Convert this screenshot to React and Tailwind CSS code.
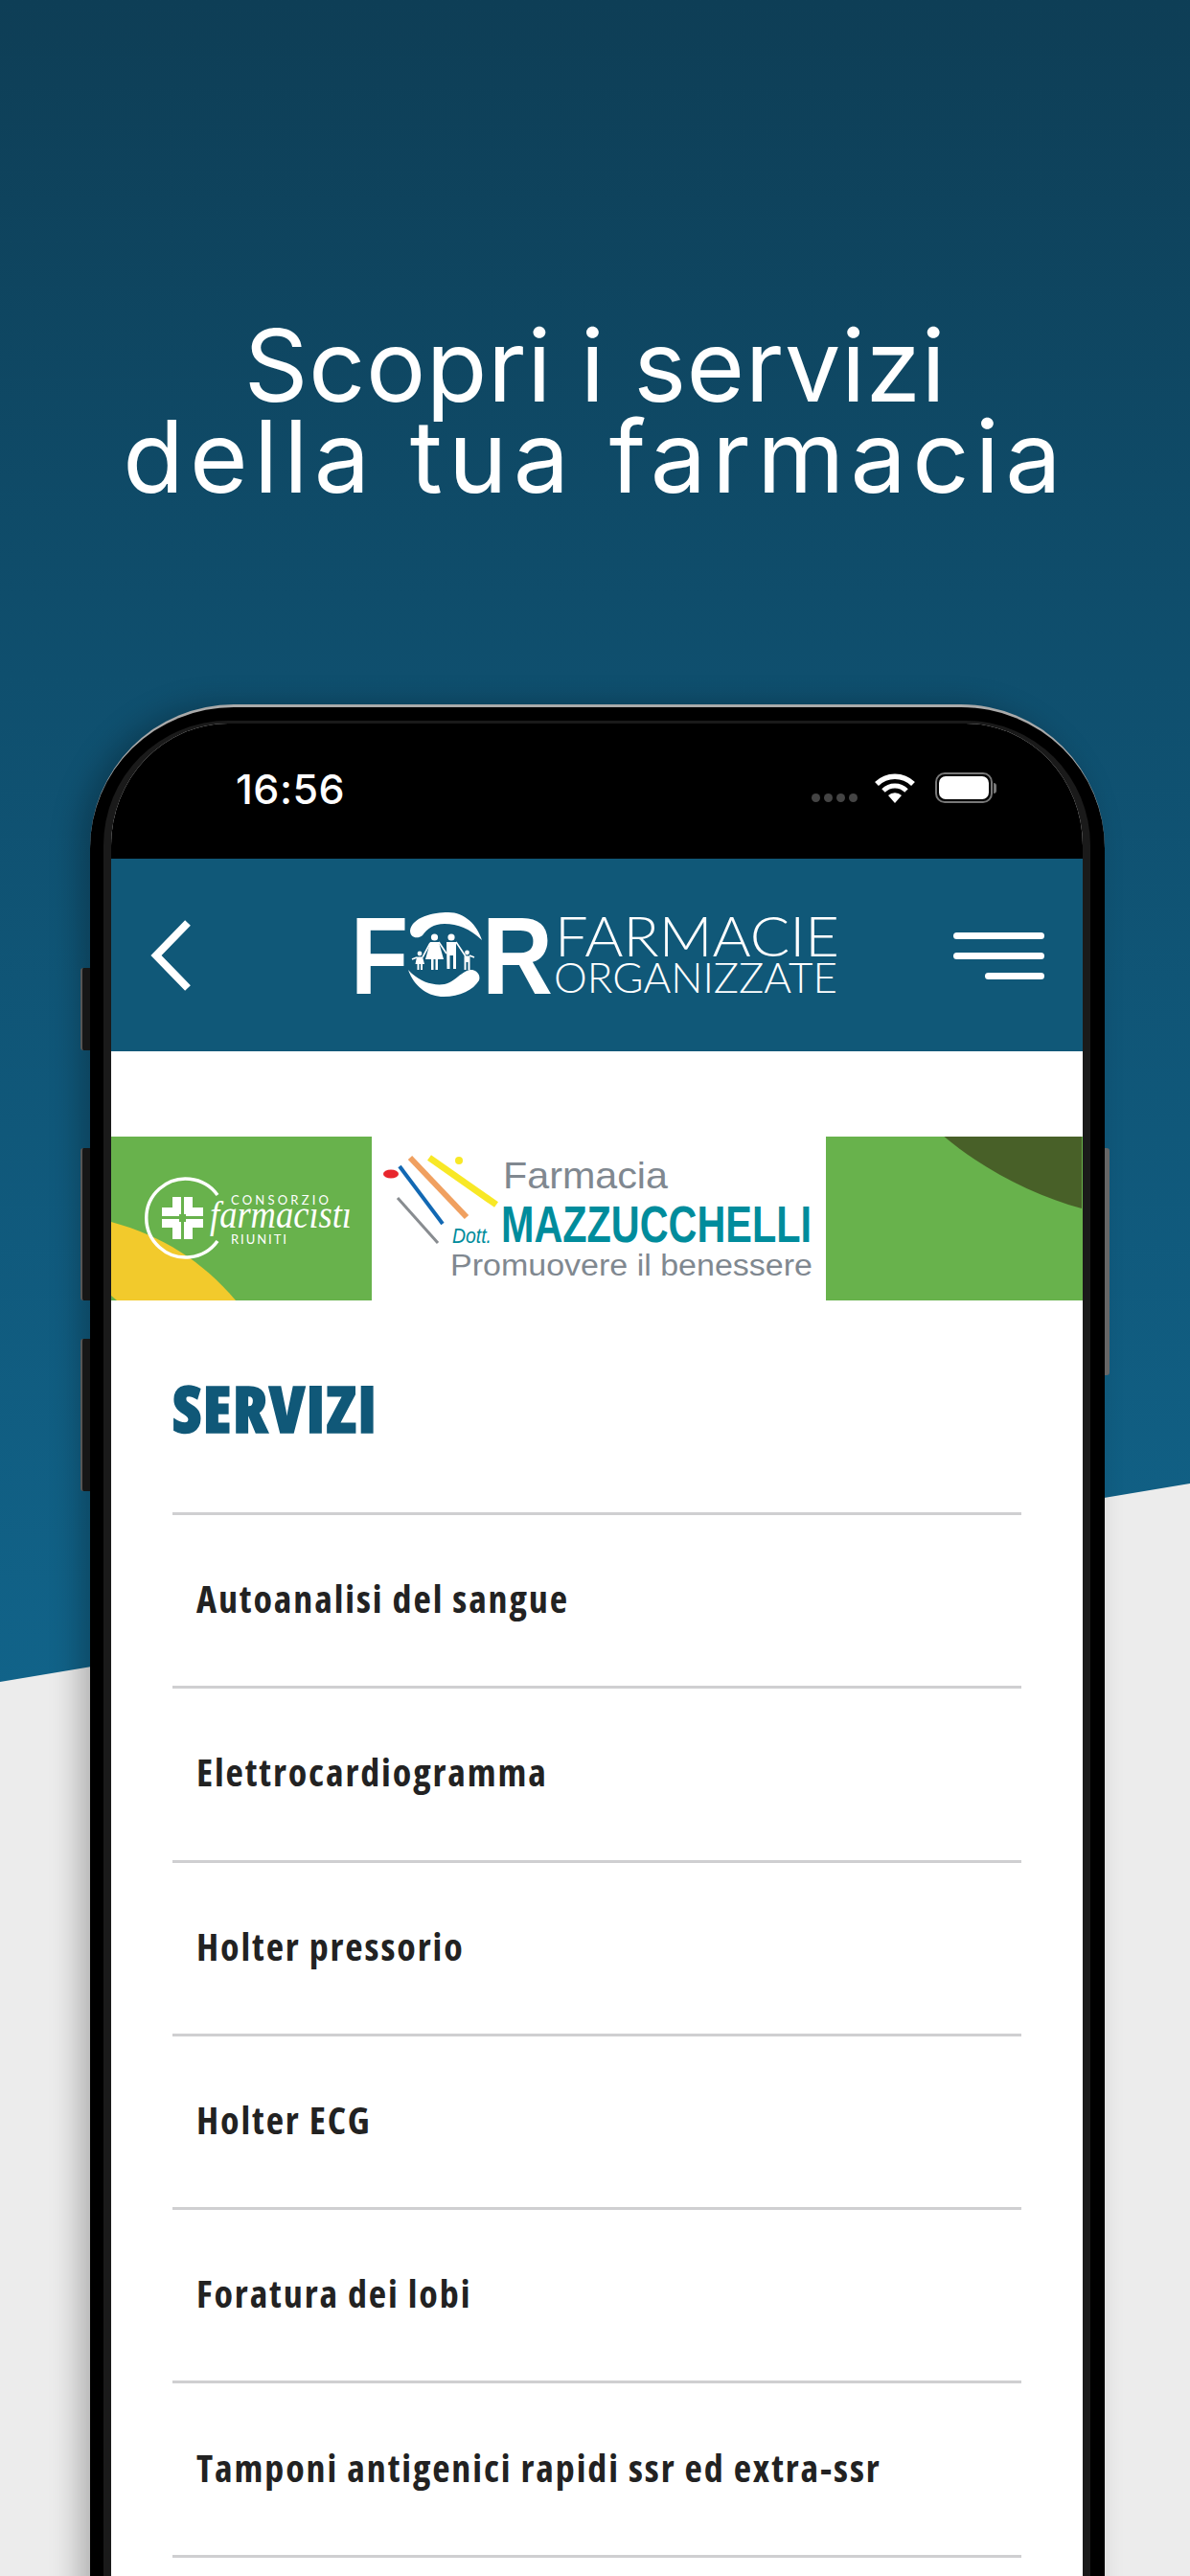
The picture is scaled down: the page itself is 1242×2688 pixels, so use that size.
const services = [
  'Autoanalisi del sangue',
  'Elettrocardiogramma',
  'Holter pressorio',
  'Holter ECG',
  'Foratura dei lobi',
  'Tamponi antigenici rapidi ssr ed extra-ssr',
];

const SideButton = ({ className }) => (
  <div className={`absolute w-[10px] rounded-l-[3px] border-l-2 border-[#555] bg-[#161616] ${className}`}></div>
);

const StatusBar = () => (
  <div className="flex h-[141px] items-start justify-between bg-black pl-[130px] pr-[90px] pt-[43px] text-white">
    <span className="font-['Inter',sans-serif] text-[43px] font-medium leading-[50px] tracking-[0.5px]">16:56</span>
    <div className="flex items-center pt-[8px]">
      <div className="mr-[18px] mt-[20px] flex gap-[4px]">
        <span className="h-[9px] w-[9px] rounded-full bg-[#444]"></span>
        <span className="h-[9px] w-[9px] rounded-full bg-[#444]"></span>
        <span className="h-[9px] w-[9px] rounded-full bg-[#444]"></span>
        <span className="h-[9px] w-[9px] rounded-full bg-[#444]"></span>
      </div>
      <svg className="mr-[21px]" width="42" height="31" viewBox="0 0 42 31">
        <path d="M2 11 A27 27 0 0 1 40 11" fill="none" stroke="#fff" strokeWidth="5.5" />
        <path d="M9 18 A17 17 0 0 1 33 18" fill="none" stroke="#fff" strokeWidth="5" />
        <path d="M14 23 A10 10 0 0 1 28 23 L21 31 Z" fill="#fff" />
      </svg>
      <div className="flex items-center">
        <div className="h-[32px] w-[60px] rounded-[10px] border-2 border-[#777] p-[2px]">
          <div className="h-full w-full rounded-[7px] bg-white"></div>
        </div>
        <div className="ml-[1px] h-[11px] w-[3px] rounded-r-full bg-[#777]"></div>
      </div>
    </div>
  </div>
);

const ForLogo = () => (
  <svg width="525" height="96" viewBox="360 950 525 96">
    <text x="366" y="1038" fill="#fff" fontFamily="Liberation Sans" fontWeight="700" fontSize="115" textLength="60" lengthAdjust="spacingAndGlyphs">F</text>
    <path d="M428 972 C430 958 452 953 468 953 C485 953 498 966 503 982 C490 970 478 965 464 965 C452 965 446 970 441 977 C436 981 428 980 428 972 Z" fill="#fff" />
    <path d="M426 1013 C436 1024 450 1030 464 1028 C474 1026 480 1016 490 1013 C497 1012 502 1018 500 1024 C494 1034 480 1041 463 1041 C446 1041 432 1030 426 1013 Z" fill="#fff" />
    <g fill="#fff">
      <circle cx="453.5" cy="979" r="3.6" />
      <path d="M449 984 H458 L463 1002 H457 V1013 H454.5 V1002 H452.5 V1013 H450 V1002 H444 Z" />
      <circle cx="471" cy="979" r="3.6" />
      <path d="M466 984 H476 V1012 H473 V998 H469.5 V1012 H466.5 Z" />
      <circle cx="438" cy="996" r="2.4" />
      <path d="M435 999.5 H441 L443 1007 H441 V1013 H439 V1007 H437.5 V1013 H435.5 V1007 H433.5 Z" />
      <circle cx="487.5" cy="995" r="2.4" />
      <path d="M484.5 998.5 H490.5 V1013 H488.5 V1005 H486.5 V1013 H484.5 Z" />
    </g>
    <path d="M476 984 L486 999 M490 998 L495 1000 M449 985 L441 1000 M435 1000 L430 1002 M458 984 L466 996" stroke="#fff" strokeWidth="1.6" fill="none" />
    <text x="503" y="1038" fill="#fff" fontFamily="Liberation Sans" fontWeight="700" fontSize="115" textLength="74" lengthAdjust="spacingAndGlyphs">R</text>
    <text x="579" y="999" fill="#fff" fontFamily="Lato" fontWeight="300" fontSize="58" textLength="297" lengthAdjust="spacingAndGlyphs">FARMACIE</text>
    <text x="578" y="1037" fill="#fff" fontFamily="Lato" fontWeight="300" fontSize="43" textLength="296" lengthAdjust="spacingAndGlyphs">ORGANIZZATE</text>
  </svg>
);

const Header = () => (
  <div className="flex h-[201px] items-center bg-[#105878] pl-[41px] pr-[40px]">
    <svg width="42" height="74" viewBox="0 0 42 74" className="mt-[1px]">
      <path d="M39 3 L6 37 L39 71" fill="none" stroke="#fff" strokeWidth="8" />
    </svg>
    <div className="ml-[161px] mt-[1px]">
      <ForLogo />
    </div>
    <div className="ml-auto flex flex-col items-end gap-[14px] pt-[1px]">
      <div className="h-[7px] w-[95px] rounded-full bg-white"></div>
      <div className="h-[7px] w-[95px] rounded-full bg-white"></div>
      <div className="h-[7px] w-[62px] rounded-full bg-white"></div>
    </div>
  </div>
);

const ConsorzioBanner = () => (
  <svg width="272" height="171" viewBox="116 1186 272 171" className="shrink-0">
    <rect x="116" y="1186" width="272" height="171" fill="#68b24c" />
    <path d="M116 1275 C170 1290 210 1315 246 1357 H122 L116 1352 Z" fill="#f2ca2c" />
    <path d="M227 1247 A41 41 0 1 0 227 1295" fill="none" stroke="#fff" strokeWidth="3.5" />
    <g fill="#fff">
      <rect x="180" y="1249" width="9" height="18" />
      <rect x="192" y="1249" width="9" height="18" />
      <rect x="180" y="1275" width="9" height="18" />
      <rect x="192" y="1275" width="9" height="18" />
      <rect x="169" y="1260" width="18" height="9" />
      <rect x="169" y="1272" width="18" height="9" />
      <rect x="194" y="1260" width="18" height="9" />
      <rect x="194" y="1272" width="18" height="9" />
    </g>
    <text x="241" y="1257" fill="#fff" fontFamily="Lato" fontSize="13" textLength="102">CONSORZIO</text>
    <text x="219" y="1281" fill="#fff" fontFamily="Liberation Serif" fontStyle="italic" fontSize="40" textLength="148" lengthAdjust="spacingAndGlyphs">farmacıstı</text>
    <text x="241" y="1298" fill="#fff" fontFamily="Lato" fontSize="13" textLength="58">RIUNITI</text>
  </svg>
);

const MazzucchelliBanner = () => (
  <svg width="474" height="171" viewBox="388 1186 474 171" className="shrink-0">
    <rect x="388" y="1186" width="474" height="171" fill="#fff" />
    <ellipse cx="408" cy="1225" rx="8" ry="4.5" fill="#e8262c" />
    <line x1="417" y1="1217" x2="462" y2="1277" stroke="#1268b3" strokeWidth="4" />
    <line x1="428" y1="1208" x2="487" y2="1270" stroke="#f0a060" strokeWidth="6" />
    <line x1="448" y1="1208" x2="518" y2="1257" stroke="#f8e826" strokeWidth="7" />
    <circle cx="479" cy="1211" r="4" fill="#f8e826" />
    <line x1="415" y1="1250" x2="457" y2="1297" stroke="#888c90" strokeWidth="3" />
    <text x="525" y="1240" fill="#808890" fontFamily="Liberation Sans" fontSize="39" textLength="172" lengthAdjust="spacingAndGlyphs">Farmacia</text>
    <text x="472" y="1297" fill="#008c9c" fontFamily="Liberation Sans" fontStyle="italic" fontSize="22" textLength="41" lengthAdjust="spacingAndGlyphs">Dott.</text>
    <text x="523" y="1296" fill="#008c9c" fontFamily="Liberation Sans" fontWeight="700" fontSize="54" textLength="324" lengthAdjust="spacingAndGlyphs">MAZZUCCHELLI</text>
    <text x="470" y="1331" fill="#808890" fontFamily="Liberation Sans" fontSize="31" textLength="378" lengthAdjust="spacingAndGlyphs">Promuovere il benessere</text>
  </svg>
);

const LeafBanner = () => (
  <svg className="min-w-0 flex-1" height="171" viewBox="862 1186 267 171" preserveAspectRatio="none">
    <rect x="862" y="1186" width="267" height="171" fill="#68b24c" />
    <path d="M985 1186 C1025 1220 1080 1248 1128 1261 V1186 Z" fill="#486028" />
  </svg>
);

export default function App() {
  return (
    <div className="relative h-[2688px] w-[1242px] overflow-hidden bg-[#ececec]">
      <div className="absolute inset-x-0 top-0 h-[1760px] bg-linear-to-b from-[#0e3e56] via-[#0f4f6e] via-40% to-[#116389] [clip-path:polygon(0_0,100%_0,100%_1548px,0_1755px)]"></div>

      <div className="relative">
        <h1 className="pt-[334px] text-center font-['Inter',sans-serif] text-[104px] font-normal leading-[95px] text-white">
          <span className="block tracking-[0.5px]">Scopri i servizi</span>
          <span className="block tracking-[6.2px]">della tua farmacia</span>
        </h1>

        <div className="relative ml-[94px] mt-[211px] h-[2100px] w-[1059px]">
          <SideButton className="left-[-10px] top-[275px] h-[86px]" />
          <SideButton className="left-[-10px] top-[463px] h-[159px]" />
          <SideButton className="left-[-10px] top-[662px] h-[159px]" />
          <div className="absolute right-[-5px] top-[463px] h-[237px] w-[5px] rounded-r-[3px] bg-[#666]"></div>

          <div className="h-full rounded-t-[150px] border-t-[3px] border-[#aaa] bg-black pl-[14px] pr-[15px] pt-[14px] shadow-[-12px_0_30px_rgba(0,0,0,0.25)]">
            <div className="h-full overflow-hidden rounded-t-[130px] border-x-[8px] border-t-[3px] border-[#1a1a1a] bg-white">
              <StatusBar />
              <Header />
              <div className="flex pt-[89px]">
                <ConsorzioBanner />
                <MazzucchelliBanner />
                <LeafBanner />
              </div>
              <div className="pl-[64px] pr-[64px] pt-[83px]">
                <h2 className="font-['Open_Sans',sans-serif] text-[67px] font-extrabold leading-[58px] tracking-[1.4px] text-[#105878] [font-stretch:75%] [-webkit-text-stroke:1.5px_#105878]">SERVIZI</h2>
                <ul className="mt-[80px] border-t-[3px] border-[#cfcfd1]">
                  {services.map((name) => (
                    <li key={name} className="flex h-[181.3px] items-center border-b-[3px] border-[#cfcfd1] pb-[4px] pl-[25px] font-['Open_Sans',sans-serif] text-[40px] font-bold tracking-[1.9px] text-[#222] [font-stretch:75%]">
                      {name}
                    </li>
                  ))}
                </ul>
              </div>
            </div>
          </div>
        </div>
      </div>
    </div>
  );
}
